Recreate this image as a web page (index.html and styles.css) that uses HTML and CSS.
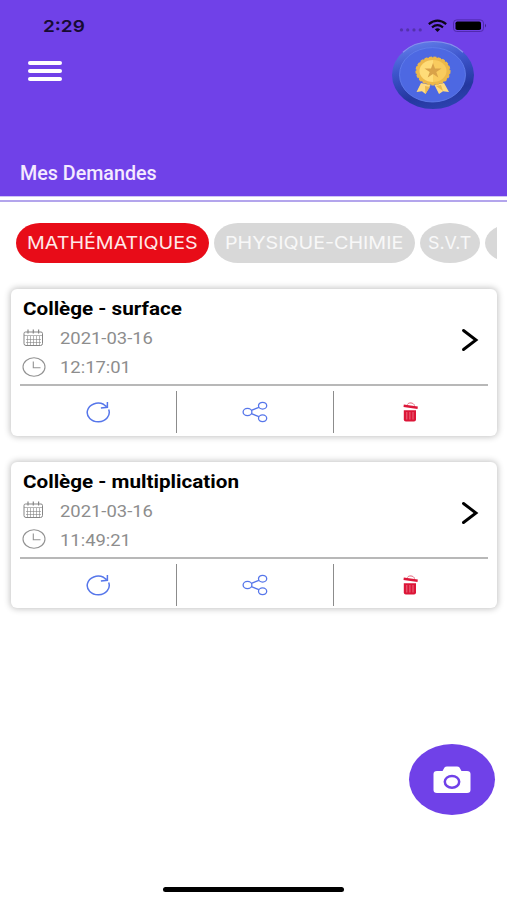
FILE: index.html
```html
<!DOCTYPE html>
<html lang="fr">
<head>
<meta charset="utf-8">
<title>Mes Demandes</title>
<link rel="stylesheet" href="styles.css">
</head>
<body>
<svg class="defs" aria-hidden="true">
  <symbol id="calendar" viewBox="0 0 21 18">
    <g fill="none" stroke="#858585">
      <path d="M2.500 3h15.500q1.500 0 1.500 1.500v10q0 2-2 2H3q-2 0-2-2v-10Q1 3 2.500 3z"/>
      <path d="M5 .5v4M10.300 .5v4M15.600 .5v4" stroke-width="1.200"/>
      <path d="M4.500 7v9M7.500 7v9M10.500 7v9M13.500 7v9M16.500 7v9M1 6.500h18.500M3 10.500h15M3 13.500h15" stroke-width=".6"/>
    </g>
  </symbol>
  <symbol id="clock" viewBox="0 0 24 20">
    <g fill="none" stroke="#929292" stroke-width="1.1"><ellipse cx="12" cy="10" rx="11" ry="9.200"/><path d="M11.300 4.500v6.300h7.200"/></g>
  </symbol>
  <symbol id="refresh" viewBox="0 0 26 22">
    <path d="M23.700 8.600A11 9.300 0 1 1 18.500 3.300L21.500 5.500M22.400 .9v5.400l-6.500 .6" fill="none" stroke="#5676ea" stroke-width="1.500"/>
  </symbol>
  <symbol id="share" viewBox="0 0 26 22">
    <g fill="none" stroke="#5676ea" stroke-width="1.300"><ellipse cx="5.500" cy="11" rx="4.400" ry="3.600"/><ellipse cx="20.600" cy="4.700" rx="4.100" ry="3.400"/><ellipse cx="20.600" cy="17.300" rx="4.100" ry="3.400"/><path d="M9.400 9.300l7.500-3M9.400 12.700l7.500 3"/></g>
  </symbol>
  <symbol id="trash" viewBox="0 0 16 20">
    <path d="M.8 2.500l14 2.100-.3 2.400-14-2.100z" fill="#dc1638"/>
    <path d="M4.500 2.600c.5-2.500 6.500-2.200 7 1" fill="none" stroke="#e26378"/>
    <path d="M.8 8.200h12.200v9.300q0 1.900-2 1.900H2.800q-2 0-2-1.900z" fill="#dc1638"/>
    <path d="M3.800 10v7.500M6.900 10v7.500M10 10v7.500" stroke="#f1949f" stroke-width=".7"/>
  </symbol>
  <symbol id="chevron" viewBox="0 0 18 24">
    <path d="M2.500 2.500L15 12 2.500 21.500" fill="none" stroke="#000" stroke-width="2.900" stroke-linecap="round"/>
  </symbol>
</svg>

<header class="header">
  <div class="status">
    <span class="time">2:29</span>
    <svg class="signals" viewBox="0 0 90 16">
      <g fill="#5431ad"><circle cx="4.500" cy="12.900" r="1.600"/><circle cx="10.700" cy="12.900" r="1.600"/><circle cx="17" cy="12.900" r="1.600"/><circle cx="23.200" cy="12.900" r="1.600"/></g>
      <g fill="none" stroke="#0c0618" stroke-width="2.200"><path d="M31.800 7.200Q40.500 .2 49.200 7.200M35 10.300q5.500-4.300 11 0"/></g>
      <path d="M37.800 12.200q2.700-1.700 5.400 0L40.500 15z" fill="#0c0618"/>
      <rect x="56.500" y="2.900" width="30" height="11.600" rx="3.200" fill="none" stroke="#5029ad"/>
      <rect x="58.500" y="4.500" width="25.500" height="8.500" rx="1.800" fill="#000"/>
      <path d="M88 6.700q2 1.800 0 3.800z" fill="#3c2280"/>
    </svg>
  </div>
  <div class="toolbar">
    <div class="menu"><i></i><i></i><i></i></div>
    <svg class="medal" viewBox="0 0 84 70">
      <defs>
        <linearGradient id="rim" x1=".35" y1="0" x2=".65" y2="1"><stop offset="0" stop-color="#607ce8"/><stop offset=".35" stop-color="#3d55cc"/><stop offset=".75" stop-color="#24379f"/><stop offset="1" stop-color="#2d43b0"/></linearGradient>
        <linearGradient id="gold" x1="0" x2="1"><stop offset=".5" stop-color="#ffdc78"/><stop offset=".5" stop-color="#f9cb5e"/></linearGradient>
      </defs>
      <ellipse cx="42" cy="35" rx="41" ry="34" fill="url(#rim)"/>
      <path d="M12 12.300Q23 1.600 42 1.500T72 12.300" fill="none" stroke="#8790ed" stroke-width="1.200"/>
      <ellipse cx="41.500" cy="34.800" rx="33" ry="27.200" fill="#4d68e2" stroke="#6380ed" stroke-width=".8"/>
      <path d="M30 43l-4.500 9 5.500-.8 3.500 2.700 5-9zM53 43l5 9-6-.8-4 2.700-4.500-9z" fill="#ffda80"/>
      <path d="M34 46l5 1-4.500 7zM45 46l5-1 2 6z" fill="#eab84f"/>
      <ellipse cx="42" cy="31" rx="16.800" ry="13.700" fill="#edb84a" stroke="#edb84a" stroke-width="1.500" stroke-dasharray="3 1.500"/>
      <ellipse cx="42" cy="31" rx="13.500" ry="11" fill="url(#gold)"/>
      <path d="M42 23l2 5.500h6.500l-5.200 3.400 2 5.600-5.300-3.400-5.300 3.400 2-5.600-5.200-3.400H40z" fill="#d9a248"/>
    </svg>
  </div>
  <h1 class="heading"><span>Mes Demandes</span></h1>
</header>
<div class="rule"></div>

<nav class="tabs">
  <a class="tab maths active"><span>MATHÉMATIQUES</span></a>
  <a class="tab physics"><span>PHYSIQUE-CHIMIE</span></a>
  <a class="tab svt"><span>S.V.T</span></a>
  <a class="tab more"></a>
</nav>

<main class="cards">
  <article class="card">
    <div class="body">
      <div class="info">
        <h2><span>Collège - surface</span></h2>
        <p><svg class="cal"><use href="#calendar"/></svg><span class="date">2021-03-16</span></p>
        <p><svg class="clk"><use href="#clock"/></svg><span class="date">12:17:01</span></p>
      </div>
      <svg class="chev"><use href="#chevron"/></svg>
    </div>
    <div class="actions">
      <div><svg class="act"><use href="#refresh"/></svg></div>
      <div><svg class="act"><use href="#share"/></svg></div>
      <div><svg class="bin"><use href="#trash"/></svg></div>
    </div>
  </article>
  <article class="card">
    <div class="body">
      <div class="info">
        <h2><span>Collège - multiplication</span></h2>
        <p><svg class="cal"><use href="#calendar"/></svg><span class="date">2021-03-16</span></p>
        <p><svg class="clk"><use href="#clock"/></svg><span class="date">11:49:21</span></p>
      </div>
      <svg class="chev"><use href="#chevron"/></svg>
    </div>
    <div class="actions">
      <div><svg class="act"><use href="#refresh"/></svg></div>
      <div><svg class="act"><use href="#share"/></svg></div>
      <div><svg class="bin"><use href="#trash"/></svg></div>
    </div>
  </article>
</main>

<footer class="footer">
  <div class="camera">
    <svg viewBox="0 0 38 28"><path d="M4 5h5.500l2-3.500Q12.300.5 14 .5h10q1.700 0 2.500 1L28.500 5H34q3.500 0 3.500 3v16q0 3-3.500 3H4Q.5 27 .5 24V8Q.5 5 4 5z" fill="#fff"/><ellipse cx="19" cy="15.800" rx="7.200" ry="5.900" fill="#fff" stroke="#7041e8" stroke-width="2.500"/></svg>
  </div>
  <div class="home"></div>
</footer>
</body>
</html>
```

FILE: styles.css
```css
* { box-sizing: border-box; }
body {
  margin: 0;
  width: 507px;
  height: 900px;
  display: flex;
  flex-direction: column;
  overflow: hidden;
  background: #fff;
  font-family: Roboto, "Liberation Sans", sans-serif;
}
svg { display: block; flex: none; }
.defs { position: absolute; width: 0; height: 0; }
h1, h2, p { margin: 0; }
h1 span, h2 span, .date, .time, .tab span {
  display: inline-block;
  white-space: nowrap;
  transform-origin: left center;
}

.header { height: 196px; flex: none; background: #7041e8; display: flex; flex-direction: column; }
.status { height: 40px; flex: none; padding: 17px 20px 0 43px; display: flex; justify-content: space-between; }
.time { font: 600 16.500px/18px Inter, sans-serif; color: #170b33; transform: scaleX(1.15); }
.signals { width: 90px; height: 16px; }
.toolbar { height: 70px; padding: 0 32px 0 28px; display: flex; justify-content: space-between; }
.menu { width: 34px; padding-top: 21px; display: flex; flex-direction: column; gap: 4px; }
.menu i { height: 4px; border-radius: 2px; background: #fff; }
.medal { width: 84px; height: 70px; }
.heading { padding: 51px 0 0 19.500px; font-size: 19.500px; line-height: 25px; font-weight: 500; color: #f4eaff; }
.heading span { transform: scaleX(1.01); }
.rule { height: 6px; flex: none; border-top: 1px solid #cfc3f5; border-bottom: 2px solid #b3a5ec; }

.tabs { height: 40px; flex: none; width: 481px; margin: 21px 0 0 16px; display: flex; gap: 5px; overflow: hidden; }
.tab { flex: none; height: 40px; border-radius: 24px / 20px; background: #d8d8d8; color: #f8f8f8; padding-left: 11px; font: 400 17px/40px Inter, sans-serif; }
.tab.active { background: #e80c18; color: #ffe8e8; }
.maths { width: 193px; }
.physics { width: 201px; }
.svt { width: 60px; padding-left: 8px; }
.svt, .more { border-radius: 30px / 20px; }
.more { width: 60px; }
.tab span { transform: scaleX(1.158); }
.svt span { transform: scaleX(1.05); }

.cards { padding: 26px 10px 0 11px; display: flex; flex-direction: column; gap: 26px; }
.card { height: 146.500px; border-radius: 6px; background: #fff; padding: 0 9px; box-shadow: 0 0 6px 1px rgba(0, 0, 0, .24); }
.body { height: 97px; border-bottom: 2px solid #b8b8b8; display: flex; justify-content: space-between; padding: 9px 9px 0 3px; }
h2 { height: 25px; font-size: 17.500px; line-height: 22px; font-weight: 700; color: #000; }
h2 span { transform: scaleX(1.18); }
.info p { height: 29px; display: flex; align-items: center; color: #8d8d8d; font-size: 16px; }
.cal { width: 21px; height: 18px; margin-right: 16px; }
.clk { width: 24px; height: 20px; margin: 0 14px 0 -1px; }
.date { transform: scaleX(1.15); padding-top: 2px; }
.chev { width: 18px; height: 24px; margin-top: 30px; }
.actions { height: 49px; padding-top: 5px; display: grid; grid-template-columns: 156px 157px 1fr; }
.actions div { height: 42px; display: flex; align-items: center; justify-content: center; }
.actions div + div { border-left: 1px solid #8c8c8c; }
.act { width: 26px; height: 22px; }
.bin { width: 16px; height: 20px; }

.footer { margin-top: auto; height: 156px; display: flex; flex-direction: column; }
.camera { align-self: flex-end; width: 86px; height: 71px; margin-right: 12px; border-radius: 50%; background: #7041e8; display: flex; align-items: center; justify-content: center; }
.camera svg { width: 38px; height: 28px; }
.home { width: 181px; height: 5px; border-radius: 3px; background: #000; margin: 72px 0 0 163px; }
```
